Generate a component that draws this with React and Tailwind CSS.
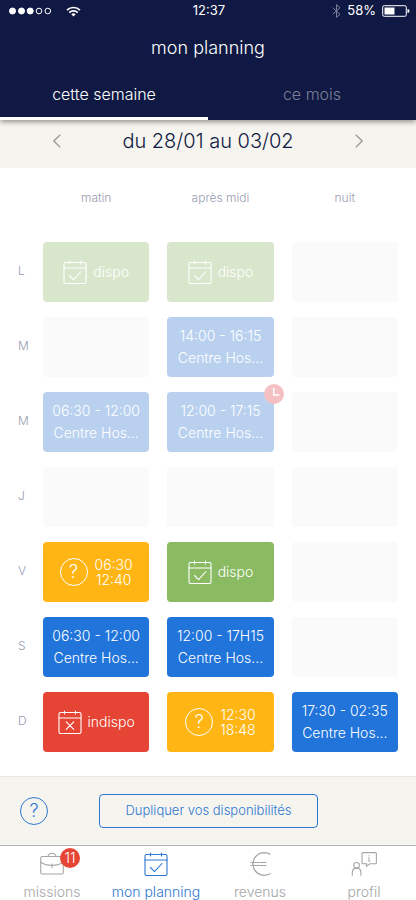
import { useState } from 'react'

const dispo = { type: 'dispo' }
const mission = (hours) => ({ type: 'mission', hours, place: 'Centre Hos...' })
const pending = (start, end) => ({ type: 'pending', start, end })

const columns = ['matin', 'après midi', 'nuit']

const days = [
  { label: 'L', name: 'lundi', past: true, slots: [dispo, dispo, null] },
  { label: 'M', name: 'mardi', past: true, slots: [null, mission('14:00 - 16:15'), null] },
  {
    label: 'M',
    name: 'mercredi',
    past: true,
    slots: [mission('06:30 - 12:00'), { ...mission('12:00 - 17:15'), late: true }, null],
  },
  { label: 'J', name: 'jeudi', past: true, slots: [null, null, null] },
  { label: 'V', name: 'vendredi', slots: [pending('06:30', '12:40'), dispo, null] },
  { label: 'S', name: 'samedi', slots: [mission('06:30 - 12:00'), mission('12:00 - 17H15'), null] },
  {
    label: 'D',
    name: 'dimanche',
    slots: [{ type: 'indispo' }, pending('12:30', '18:48'), mission('17:30 - 02:35')],
  },
]

const slotColors = {
  dispo: 'bg-[#8abb62]',
  mission: 'bg-[#2074da]',
  pending: 'bg-[#ffb614]',
  indispo: 'bg-[#e64536]',
}

const pastColors = {
  dispo: 'bg-[#d8e6cc]',
  mission: 'bg-[#b9d1ef]',
}

function CalendarIcon({ crossed }) {
  return (
    <svg
      className="size-6 shrink-0"
      viewBox="0 0 24 24"
      fill="none"
      stroke="currentColor"
      strokeWidth="1.1"
      strokeLinecap="round"
      strokeLinejoin="round"
      aria-hidden="true"
    >
      <rect x="1" y="2.5" width="22" height="21" rx="1.5" />
      <path d="M1 8h22M6.5 1v3M17.5 1v3" />
      {crossed ? <path d="M8.2 11.8l7.6 7.6M15.8 11.8l-7.6 7.6" /> : <path d="M6.5 15.5l4 4.2 7.5-8.2" />}
    </svg>
  )
}

function BriefcaseIcon() {
  return (
    <svg className="size-6" viewBox="0 0 24 24" fill="none" stroke="currentColor" strokeWidth="1.1" aria-hidden="true">
      <rect x="0.7" y="4.5" width="22.6" height="17.5" rx="1.5" />
      <path d="M8 4.5c.2-2 1.5-3.3 4-3.3s3.8 1.3 4 3.3M.7 10c3 2.5 6.800 3.300 11.300 3.300s8.300-.8 11.300-3.300M12 11.500v4.500" />
    </svg>
  )
}

function EuroIcon() {
  return (
    <svg className="size-6" viewBox="0 0 24 24" fill="none" stroke="currentColor" strokeWidth="1.2" aria-hidden="true">
      <path d="M22.500 2.500A12 11.500 0 0 0 16.500.7C9.800.7 5 5.600 5 12s4.800 11.300 11.500 11.300a12 11.500 0 0 0 6-1.800M2.500 10.500H18.500M2.500 13.500H18.500" />
    </svg>
  )
}

function ProfileIcon() {
  return (
    <svg className="h-6 w-[26px]" viewBox="0 0 26 24" fill="none" stroke="currentColor" strokeWidth="1.1" aria-hidden="true">
      <circle cx="5.6" cy="13.3" r="2.8" />
      <path d="M1.300 23.700v-3.200c0-2.600 1.600-4.400 4.300-4.400s4.300 1.800 4.300 4.400v3.200" />
      <path d="M12 .6h12.400c.6 0 1 .4 1 1v9.200c0 .6-.4 1-1 1H18.800l-3.300 2.300v-2.300H12c-.6 0-1-.4-1-1V1.600c0-.6.4-1 1-1z" />
      <path d="M18 3.200v1.200M17.200 5.800h.9v3.200M17 9h2.300" strokeWidth="0.9" />
    </svg>
  )
}

function Slot({ slot, past }) {
  if (!slot) return <div className="h-[60px] rounded bg-[#fafafa]" />

  const color = past ? pastColors[slot.type] : slotColors[slot.type]

  return (
    <div className={`relative flex h-[60px] items-center justify-center rounded text-sm font-light text-white ${color}`}>
      {slot.type === 'mission' && (
        <div className="text-center leading-[22px] whitespace-nowrap">
          <p>{slot.hours}</p>
          <p>{slot.place}</p>
        </div>
      )}
      {slot.type === 'pending' && (
        <div className="flex items-center gap-[7px]">
          <span className="flex size-7 items-center justify-center rounded-full border border-white text-lg leading-4">
            ?
          </span>
          <div className="text-center leading-[15px]">
            <p>{slot.start}</p>
            <p>{slot.end}</p>
          </div>
        </div>
      )}
      {(slot.type === 'dispo' || slot.type === 'indispo') && (
        <div className="flex items-center gap-1.5">
          <CalendarIcon crossed={slot.type === 'indispo'} />
          <span>{slot.type}</span>
        </div>
      )}
      {slot.late && (
        <span className="absolute -top-2 -right-2.5 size-5 rounded-full bg-[#f5c0c2]">
          <svg viewBox="0 0 20 20" fill="none" stroke="white" strokeWidth="1.5" aria-label="en attente">
            <path d="M9.7 4v7h5.5" />
          </svg>
        </span>
      )}
    </div>
  )
}

function StatusBar() {
  return (
    <div className="grid h-[22px] grid-cols-3 items-center pr-1.5 pl-2 text-[13px] text-white">
      <div className="flex items-center gap-3.5">
        <svg className="h-2 w-[44px]" viewBox="0 0 44 8" fill="white" stroke="white" aria-hidden="true">
          <circle cx="4.5" cy="4" r="3" />
          <circle cx="13.5" cy="4" r="3" />
          <circle cx="22.2" cy="4" r="3" />
          <circle cx="31" cy="4" r="2.8" fill="none" />
          <circle cx="39.8" cy="4" r="2.8" fill="none" />
        </svg>
        <svg className="h-[11px] w-[15px]" viewBox="0 0 15 11" fill="none" stroke="white" strokeWidth="1.7" aria-hidden="true">
          <path d="M1 4.200a9.200 9.200 0 0 1 13 0M3.300 6.600a6 6 0 0 1 8.400 0" />
          <path d="M7.500 10.500L5.300 8.300a3.100 3.100 0 0 1 4.400 0z" fill="white" stroke="none" />
        </svg>
      </div>
      <p className="text-center">12:37</p>
      <div className="flex items-center justify-end gap-1.5">
        <svg className="h-3.5 w-[9px] text-[#7d819c]" viewBox="0 0 9 14" fill="none" stroke="currentColor" aria-hidden="true">
          <path d="M.7 3.700l7.300 6.600L4.500 13.300V.7L8 3.700.7 10.300" />
        </svg>
        <span>58%</span>
        <svg className="h-3 w-7" viewBox="0 0 28 12" fill="none" stroke="white" aria-hidden="true">
          <rect x="0.7" y="0.7" width="23.6" height="10.6" rx="1.5" />
          <rect x="2.5" y="2.5" width="10" height="7" fill="white" stroke="none" />
          <path d="M25.500 4v4c1.500-.4 2-1.200 2-2s-.5-1.600-2-2z" fill="white" stroke="none" />
        </svg>
      </div>
    </div>
  )
}

function Chevron({ right }) {
  return (
    <svg className="h-3.5 w-2" viewBox="0 0 8 14" fill="none" stroke="currentColor" strokeWidth="1.3" aria-hidden="true">
      <path d={right ? 'M.7.7L7.2 7 .7 13.3' : 'M7.3.7L.8 7l6.5 6.3'} />
    </svg>
  )
}

const navItems = [
  { label: 'missions', icon: <BriefcaseIcon />, badge: 11 },
  { label: 'mon planning', icon: <CalendarIcon />, active: true },
  { label: 'revenus', icon: <EuroIcon /> },
  { label: 'profil', icon: <ProfileIcon /> },
]

function App() {
  const [tab, setTab] = useState('cette semaine')

  return (
    <div className="bg-white font-['Inter',sans-serif]">
      <header className="relative bg-[#101943] shadow-[0_2px_5px_rgba(0,0,0,0.4)]">
        <StatusBar />
        <h1 className="pt-3 text-center text-lg leading-7 font-light text-white">mon planning</h1>
        <div className="flex pt-2">
          {['cette semaine', 'ce mois'].map((name) => (
            <button
              key={name}
              onClick={() => setTab(name)}
              className={`flex-1 border-b-[3px] pt-3 pb-[11px] text-base leading-6 font-light ${
                tab === name ? 'border-white text-white' : 'border-transparent text-[#7b7f98]'
              }`}
            >
              {name}
            </button>
          ))}
        </div>
      </header>

      <div className="flex h-12 items-center justify-between bg-[#f5f4ef] px-[53px] pb-1.5 text-[#9b9b9b]">
        <button aria-label="semaine précédente">
          <Chevron />
        </button>
        <h2 className="text-xl leading-7 font-light text-[#101943]">du 28/01 au 03/02</h2>
        <button aria-label="semaine suivante">
          <Chevron right />
        </button>
      </div>

      <main>
        <table className="w-full table-fixed">
          <thead>
            <tr className="text-xs text-[#989cb0]">
              <td className="w-[43px]" />
              {columns.map((column) => (
                <th key={column} className="h-[74px] pr-[18px] pb-3.5 font-light">
                  {column}
                </th>
              ))}
            </tr>
          </thead>
          <tbody>
            {days.map((day) => (
              <tr key={day.name}>
                <th
                  scope="row"
                  aria-label={day.name}
                  className="pb-[17px] pl-[18px] text-left text-xs font-light text-[#989cb0]"
                >
                  {day.label}
                </th>
                {day.slots.map((slot, i) => (
                  <td key={i} className="pr-[18px] pb-[15px]">
                    <Slot slot={slot} past={day.past} />
                  </td>
                ))}
              </tr>
            ))}
          </tbody>
        </table>
      </main>

      <div className="mt-[9px] flex h-[70px] items-center border-y border-t-[#e9e8e4] border-b-[#b5b5b5] bg-[#f5f4ef] px-5 text-[#2e78d2]">
        <button
          aria-label="aide"
          className="flex size-7 items-center justify-center rounded-full border border-current text-lg leading-4 font-light"
        >
          ?
        </button>
        <button className="mr-[78px] ml-[51px] h-[34px] flex-1 rounded border border-current text-[13px] font-light whitespace-nowrap">
          Dupliquer vos disponibilités
        </button>
      </div>

      <nav className="grid grid-cols-4 pt-1.5 text-sm leading-4 font-light">
        {navItems.map((item) => (
          <a
            key={item.label}
            href="#"
            className={`flex flex-col items-center gap-2 ${item.active ? 'text-[#2e78d2]' : 'text-[#a6a6a6]'}`}
          >
            <span className="relative">
              {item.icon}
              {item.badge && (
                <span className="absolute -top-1 -right-4 flex size-5 items-center justify-center rounded-full bg-[#e64536] text-sm text-white">
                  {item.badge}
                </span>
              )}
            </span>
            <span className="whitespace-nowrap">{item.label}</span>
          </a>
        ))}
      </nav>
    </div>
  )
}

export default App
